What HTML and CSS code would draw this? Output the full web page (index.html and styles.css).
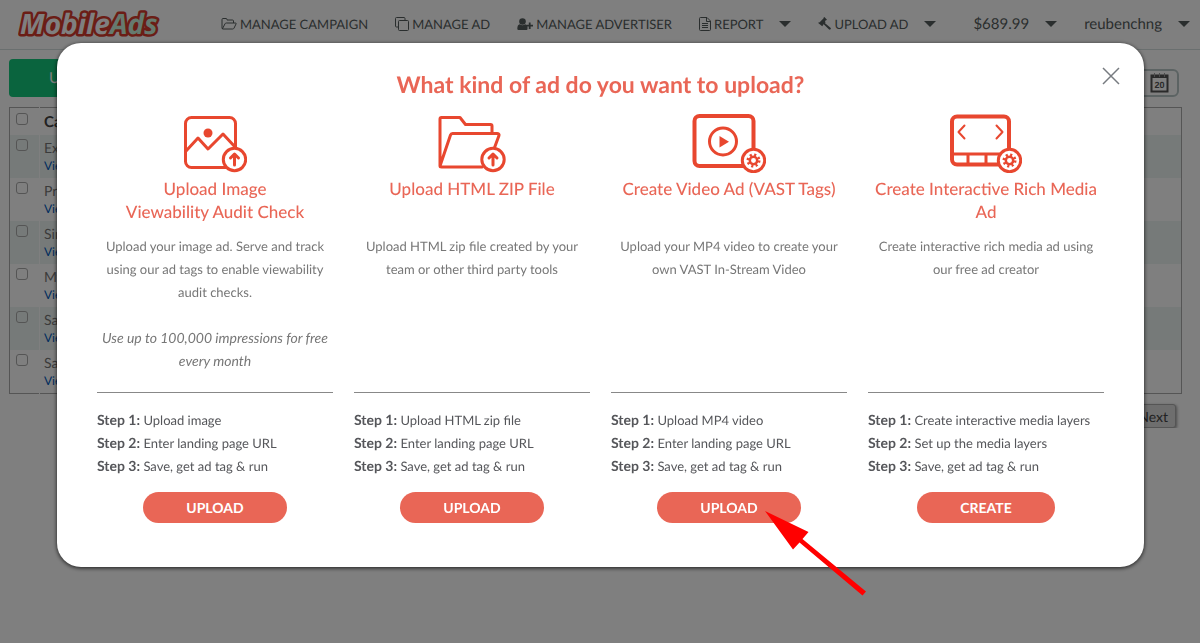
FILE: index.html
```html
<!DOCTYPE html>
<html lang="en">
<head>
    <meta charset="UTF-8">
    <meta name="viewport" content="width=device-width, initial-scale=1.0">
    <title>MobileAds</title>
    <link rel="stylesheet" href="styles.css">
</head>
<body>
    <header class="header">
        <a href="#" class="logo">
            <svg width="148" height="36" viewBox="0 0 148 36"><text x="2" y="28">Mobile<tspan>Ads</tspan></text></svg>
        </a>
        <nav class="nav">
            <a href="#">
                <svg width="16" height="14" viewBox="0 0 16 14" fill="none" stroke="currentColor"><path d="M1 11V2.5Q1 1.5 2 1.5h3q1 0 1 1v.5h5.500q1 0 1 1V6M1.300 12 4 6.800Q4.400 6 5.300 6H14.500q1 0 .5 1L13 11.200q-.5.8-1.300.8H2Q1 12 1 11"/></svg>
                MANAGE CAMPAIGN
            </a>
            <a href="#">
                <svg width="14" height="14" viewBox="0 0 14 14" fill="none" stroke="currentColor"><path d="M3.500 10H1.500Q.5 10 .5 9V1.500Q.5.5 1.500.5H9q1 0 1 1V3.500"/><rect x="3.500" y="3.500" width="10" height="10" rx="1"/></svg>
                MANAGE AD
            </a>
            <a href="#">
                <svg width="16" height="14" viewBox="0 0 16 14" fill="currentColor"><circle cx="5.500" cy="4.500" r="3.300"/><path d="M2.800 7.200q2.700 2 5.400 0 2 .3 2.300 2.800V12q0 1-1 1H1.500q-1.200 0-1.200-1.200Q.3 7.500 2.800 7.200zM11.800 5.500h1.800v2.300H16v1.800h-2.400V12h-1.800V9.600H9.600V7.800h2.200z"/></svg>
                MANAGE ADVERTISER
            </a>
            <a href="#">
                <svg width="12" height="14" viewBox="0 0 12 14" fill="none" stroke="currentColor"><path d="M1.500.5H8l3.500 3.500v8.500q0 1-1 1h-9q-1 0-1-1v-11q0-1 1-1zM7.500.5v4h4M3 6.500h6M3 8.500h6M3 10.500h6"/></svg>
                REPORT
                <span class="caret"></span>
            </a>
            <a href="#">
                <svg width="13" height="13" viewBox="0 0 13 13" fill="currentColor"><path d="M6.400.1 9 2.700l-.7.6-.4-.1-1 1 .8 1-.9.9 5.700 4.600q.8.8 0 1.600-.9.800-1.700 0L5.700 7.200l-.9.9.1.500-.7.700L.200 6l.7-.7.5.1L5.600 1.300 5.500.8z"/></svg>
                UPLOAD AD
                <span class="caret"></span>
            </a>
            <a href="#" class="account balance">$689.99 <span class="caret"></span></a>
            <a href="#" class="account">reubenchng <span class="caret"></span></a>
        </nav>
    </header>

    <main class="page">
        <div class="toolbar">
            <button class="btn-green">UPLOAD AD</button>
            <button class="btn-date" aria-label="Pick dates">
                <svg width="20" height="20" viewBox="0 0 20 20"><rect x="1.500" y="2.500" width="16" height="16" fill="none" stroke="#555" stroke-width="2"/><path d="M1 2h17v3H1z" fill="#555"/><path d="M4.500 0v4M9.500 0v4M14.500 0v4" stroke="#999" stroke-width="1"/><text x="9.500" y="15" text-anchor="middle" class="cal-day">20</text></svg>
            </button>
        </div>

        <table class="campaigns">
            <tr><th><input type="checkbox" aria-label="Select all"></th><th>Campaign</th></tr>
            <tr><td><input type="checkbox" aria-label="Select row"></td><td>Example<a href="#">View</a></td></tr>
            <tr><td><input type="checkbox" aria-label="Select row"></td><td>Product<a href="#">View</a></td></tr>
            <tr><td><input type="checkbox" aria-label="Select row"></td><td>Single<a href="#">View</a></td></tr>
            <tr><td><input type="checkbox" aria-label="Select row"></td><td>My Ads<a href="#">View</a></td></tr>
            <tr><td><input type="checkbox" aria-label="Select row"></td><td>Sample<a href="#">View</a></td></tr>
            <tr><td><input type="checkbox" aria-label="Select row"></td><td>Sample<a href="#">View</a></td></tr>
        </table>

        <div class="pager"><button>Next</button></div>
    </main>

    <div class="overlay">
        <div class="modal" role="dialog" aria-labelledby="modal-title">
            <button class="close" aria-label="Close">
                <svg width="18" height="18" viewBox="0 0 18 18" fill="none" stroke="#777b80" stroke-width="1.500"><path d="M1 1l16 16M17 1 1 17"/></svg>
            </button>
            <h1 id="modal-title">What kind of ad do you want to upload?</h1>

            <div class="options">
                <section class="option">
                    <svg class="icon" width="64" height="60" viewBox="0 0 64 60">
                        <rect x="2.500" y="4.500" width="50" height="50" rx="6"/>
                        <path d="M3 38 15 25 25 36 40 21 53 35"/>
                        <circle class="solid" cx="25" cy="20" r="4.500"/>
                        <circle class="badge" cx="51.500" cy="46.500" r="11.200"/>
                        <path d="M51.500 52V41.500M47.500 45l4-4 4 4"/>
                    </svg>
                    <h2>Upload Image<br>Viewability Audit Check</h2>
                    <div class="desc">
                        <p>Upload your image ad. Serve and track using our ad tags to enable viewability audit checks.</p>
                        <p><em>Use up to 100,000 impressions for free every month</em></p>
                    </div>
                    <ul class="steps">
                        <li><b>Step 1:</b> Upload image</li>
                        <li><b>Step 2:</b> Enter landing page URL</li>
                        <li><b>Step 3:</b> Save, get ad tag &amp; run</li>
                    </ul>
                    <div class="action"><button>UPLOAD</button></div>
                </section>

                <section class="option">
                    <svg class="icon" width="68" height="60" viewBox="0 0 68 60">
                        <path d="M2 53V6Q2 4.500 3.500 4.500H22L27.500 11.500H52.500Q54 11.500 54 13V20M2 53 12.500 22Q13 20.500 14.500 20.500H59Q61.500 20.500 61 22.500L56 36M2 53Q2 54 3.500 54H44"/>
                        <circle class="badge" cx="55" cy="46.500" r="11.200"/>
                        <path d="M55 52V41.500M51 45l4-4 4 4"/>
                    </svg>
                    <h2>Upload HTML ZIP File</h2>
                    <div class="desc">
                        <p>Upload HTML zip file created by your team or other third party tools</p>
                    </div>
                    <ul class="steps">
                        <li><b>Step 1:</b> Upload HTML zip file</li>
                        <li><b>Step 2:</b> Enter landing page URL</li>
                        <li><b>Step 3:</b> Save, get ad tag &amp; run</li>
                    </ul>
                    <div class="action"><button>UPLOAD</button></div>
                </section>

                <section class="option">
                    <svg class="icon" width="74" height="60" viewBox="0 0 74 60">
                        <rect class="thick" x="2.500" y="3" width="59" height="50" rx="5"/>
                        <circle cx="31" cy="28.500" r="13.500"/>
                        <path class="solid" d="M27.500 23v11.500l9.500-5.700z"/>
                        <circle class="badge" cx="61.500" cy="47.500" r="11.200"/>
                        <circle class="cog" cx="61.500" cy="47.500" r="3.700"/>
                        <circle class="teeth" cx="61.500" cy="47.500" r="5.500"/>
                    </svg>
                    <h2>Create Video Ad (VAST Tags)</h2>
                    <div class="desc">
                        <p>Upload your MP4 video to create your own VAST In-Stream Video</p>
                    </div>
                    <ul class="steps">
                        <li><b>Step 1:</b> Upload MP4 video</li>
                        <li><b>Step 2:</b> Enter landing page URL</li>
                        <li><b>Step 3:</b> Save, get ad tag &amp; run</li>
                    </ul>
                    <div class="action">
                        <button>UPLOAD</button>
                        <svg class="pointer" width="104" height="86" viewBox="0 0 104 86" fill="#f00"><path d="M0 0 43.500 21 37.500 28 101 80.500 97.500 84.500 34.500 31.500 28 38.500z"/></svg>
                    </div>
                </section>

                <section class="option">
                    <svg class="icon" width="72" height="60" viewBox="0 0 72 60">
                        <rect class="thick" x="2" y="3.500" width="57" height="48" rx="5"/>
                        <path d="M2 41H59M18 41V51M36 41V51"/>
                        <path class="thin" d="M14.500 12.500 8.500 19 14.500 25.500M46.500 12.500 52.500 19 46.500 25.500"/>
                        <circle class="badge" cx="59.500" cy="47.500" r="11.200"/>
                        <circle class="cog" cx="59.500" cy="47.500" r="3.700"/>
                        <circle class="teeth" cx="59.500" cy="47.500" r="5.500"/>
                    </svg>
                    <h2>Create Interactive Rich Media Ad</h2>
                    <div class="desc">
                        <p>Create interactive rich media ad using our free ad creator</p>
                    </div>
                    <ul class="steps">
                        <li><b>Step 1:</b> Create interactive media layers</li>
                        <li><b>Step 2:</b> Set up the media layers</li>
                        <li><b>Step 3:</b> Save, get ad tag &amp; run</li>
                    </ul>
                    <div class="action"><button>CREATE</button></div>
                </section>
            </div>
        </div>
    </div>
</body>
</html>
```
FILE: styles.css
```css
* {
    box-sizing: border-box;
}
body {
    margin: 0;
    font-family: Lato, sans-serif;
    font-size: 14px;
    color: #777;
    background: #fff;
    text-rendering: geometricPrecision;
}
a {
    text-decoration: none;
}
button {
    font-family: inherit;
    text-rendering: inherit;
    cursor: pointer;
}

/* header */
.header {
    display: flex;
    align-items: center;
    justify-content: space-between;
    height: 50px;
    padding: 0 10px 2px 18px;
    border-bottom: 1px solid #d5dfdf;
}
.logo {
    display: flex;
}
.logo text {
    font-family: "Open Sans", sans-serif;
    font-size: 28px;
    font-weight: bold;
    font-style: italic;
    fill: #fff;
    stroke: #d63a2c;
    stroke-width: 5px;
    stroke-linejoin: round;
    paint-order: stroke;
}
.logo tspan {
    fill: #cdf5df;
}
.nav {
    display: flex;
    gap: 27px;
}
.nav a {
    display: flex;
    align-items: center;
    gap: 3px;
    font-size: 13px;
    color: #555c5c;
}
.nav .account {
    font-size: 15px;
}
.nav .balance {
    margin-left: 10px;
}
.caret {
    margin-left: 13px;
    border: 6px solid transparent;
    border-top-color: #555c5c;
    border-bottom: 0;
}

/* page behind the dialog */
.page {
    padding: 9px 18px 0 9px;
}
.toolbar {
    display: flex;
    justify-content: space-between;
    align-items: flex-end;
    padding-right: 3px;
}
.btn-green {
    height: 38px;
    padding: 0 40px;
    font-size: 15px;
    color: #fff;
    background: #14c87c;
    border: 0;
    border-radius: 4px;
}
.btn-date {
    display: flex;
    align-items: center;
    justify-content: flex-end;
    width: 180px;
    height: 28px;
    padding: 0 7px;
    background: #fff;
    border: 2px solid #b8c6c6;
    border-radius: 6px;
}
.cal-day {
    font-family: "Liberation Sans", sans-serif;
    font-size: 9px;
    font-weight: bold;
    fill: #555;
}
.campaigns {
    width: 100%;
    margin-top: 10px;
    border: 1px solid #aaa;
    border-collapse: collapse;
    text-align: left;
}
.campaigns tr:nth-child(even) {
    background: #edf5f3;
}
.campaigns th,
.campaigns td {
    padding: 4px 4px 3px;
    vertical-align: top;
    line-height: 18px;
}
.campaigns th {
    padding: 5px 4px 4px;
    color: #444;
    font-size: 15px;
}
.campaigns th:first-child,
.campaigns td:first-child {
    width: 30px;
    padding-left: 6px;
    border-right: 1px solid #fff;
}
.campaigns input {
    display: block;
    appearance: none;
    width: 12px;
    height: 12px;
    margin: 0;
    border: 1px solid #aaa;
    border-radius: 3px;
}
.campaigns td a {
    display: block;
    font-size: 12px;
    color: #0059bb;
}
.pager {
    display: flex;
    justify-content: flex-end;
    margin-top: 10px;
    padding-right: 6px;
}
.pager button {
    height: 24px;
    padding: 0 7px;
    font-size: 14px;
    color: #444;
    background: #dcdcdc;
    border: 1px solid #aaa;
    border-radius: 3px;
    box-shadow: 1px 1px 3px #999;
}

/* dialog */
.overlay {
    position: fixed;
    inset: 0;
    padding: 43px 56px 0 57px;
    background: rgba(0, 0, 0, 0.5);
}
.modal {
    position: relative;
    padding: 27px 40px 44px;
    background: #fff;
    border-radius: 24px;
    box-shadow: 0 1px 4px rgba(0, 0, 0, 0.8);
}
.close {
    position: absolute;
    top: 24px;
    right: 24px;
    display: flex;
    padding: 0;
    background: none;
    border: 0;
}
.modal h1 {
    margin: 0;
    font-size: 23px;
    line-height: 28px;
    font-weight: bold;
    text-align: center;
    color: #e96656;
}
.options {
    display: grid;
    grid-template-columns: repeat(4, 1fr);
    gap: 21px;
    padding-top: 15px;
}
.option {
    display: flex;
    flex-direction: column;
}
.icon {
    align-self: center;
    fill: none;
    stroke: #e8472f;
    stroke-width: 3;
    stroke-linecap: round;
    stroke-linejoin: round;
}
.icon .thick {
    stroke-width: 4;
}
.icon .thin {
    stroke-width: 2;
}
.icon .solid {
    fill: #e8472f;
    stroke: none;
}
.icon .badge {
    fill: #fff;
}
.icon .cog {
    stroke-width: 2.500;
}
.icon .teeth {
    stroke-width: 3;
    stroke-linecap: butt;
    stroke-dasharray: 2 2.320;
}
.option h2 {
    min-height: 46px;
    margin: 4px 0 12px;
    font-size: 17px;
    line-height: 23px;
    font-weight: 500;
    text-align: center;
    color: #e96656;
}
.desc {
    flex: 1;
    padding: 0 4px 19px;
    font-size: 13px;
    line-height: 23px;
    text-align: center;
    border-bottom: 1px solid #888;
}
.desc p {
    margin: 0 0 23px;
}
.desc p:last-child {
    margin: 0;
}
.desc em {
    font-size: 14px;
    line-height: 1;
}
.steps {
    margin: 0;
    padding: 16px 0 14px;
    list-style: none;
    font-size: 13px;
    line-height: 23px;
    color: #55565a;
}
.steps b {
    font-size: 14px;
    line-height: 1;
}
.action {
    position: relative;
    align-self: center;
}
.action button {
    height: 31px;
    padding: 0 43px;
    font-size: 14px;
    font-weight: bold;
    color: #fff;
    background: #e96656;
    border: 0;
    border-radius: 16px;
}
.pointer {
    position: absolute;
    top: 19px;
    left: 108px;
}
```
